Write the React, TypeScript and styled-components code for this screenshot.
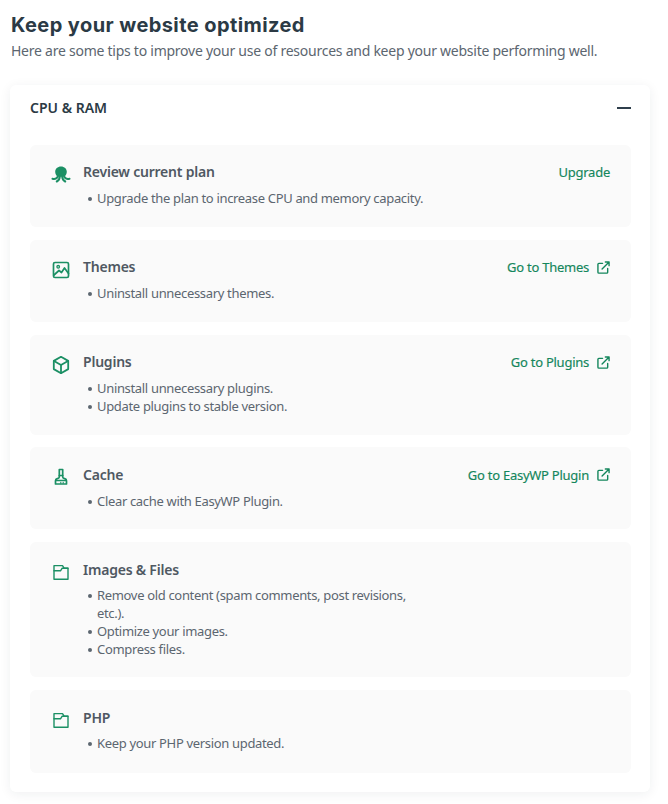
import React from "react";
import styled, { createGlobalStyle } from "styled-components";

const Global = createGlobalStyle`
  html, body { margin: 0; padding: 0; background: #fff; }
  body { font-family: "Noto Sans", "Open Sans", sans-serif; color: #4b5563; }
`;
const Page = styled.div`
  width: 668px; height: 804px; box-sizing: border-box; padding: 13px 18px 0 10px; overflow: hidden;
`;
const Title = styled.h1`
  margin: 0 0 0 1px; font: 700 20px/24px Inter, sans-serif; color: #2b3a45; letter-spacing: 0.42px;
`;
const Subtitle = styled.p`
  margin: 2px 0 0 1px; font-size: 14px; line-height: 24px; letter-spacing: -0.25px; color: #5c6670;
`;
const Card = styled.section`
  margin-top: 22px; background: #fff; border-radius: 6px; padding: 0 19px 0 20px;
  box-shadow: 0 2px 12px rgba(30, 40, 50, 0.07); height: 707px; box-sizing: border-box;
`;
const CardHeader = styled.header`
  height: 45px; margin-bottom: 14.8px; display: flex; align-items: center; justify-content: space-between;
  font-size: 14px; font-weight: 600; color: #2b3a45; letter-spacing: 0;
`;
const Minus = styled.span`
  width: 14px; height: 2px; background: #2f3f4c;
`;
const Items = styled.div`
  display: flex; flex-direction: column; gap: 12.6px;
`;
const Item = styled.article<{ $h: number }>`
  height: ${p => p.$h}px; box-sizing: border-box; background: #fafafa; border-radius: 6px;
  padding: 15.6px 21px 0 21px; display: grid; grid-template-columns: 32px 1fr auto; align-items: start;
`;
const IconBox = styled.span`
  width: 20px; height: 22px; display: flex; align-items: center; justify-content: center; color: #1b8f64;
  margin-top: 3.5px;
`;
const Body = styled.div``;
const ItemTitle = styled.h3`
  margin: 0; font-size: 14px; line-height: 24px; font-weight: 600; color: #4f5862; letter-spacing: -0.22px;
`;
const Tips = styled.ul`
  margin: 5.8px 0 0; padding: 0 0 0 14px; width: 335px; list-style: none;
`;
const Tip = styled.li`
  position: relative; font-size: 13px; line-height: 17.7px; color: #5c6670; letter-spacing: -0.33px;
  &::before { content: ""; position: absolute; left: -9px; top: 7px; width: 4px; height: 4px; border-radius: 50%; background: #5c6670; }
`;
const Action = styled.a`
  display: flex; align-items: center; gap: 8px; font-size: 13px; line-height: 24px; font-weight: 400;
  color: #14865c; letter-spacing: -0.25px; -webkit-text-stroke: 0.15px #14865c;
`;

const svgProps = { width: 20, height: 20, viewBox: "0 0 20 20", fill: "none", stroke: "currentColor", strokeWidth: 1.7, strokeLinecap: "round" as const, strokeLinejoin: "round" as const };

const Octopus = () => (
  <svg width="20" height="20" viewBox="0 0 20 20" fill="currentColor" stroke="currentColor" strokeLinecap="round">
    <path d="M10 1.500c3.400 0 5.800 2.300 5.800 5.200 0 2.200-1.100 3.500-2 4.500-.6.800-7 .8-7.600 0-.9-1-2-2.300-2-4.500C4.200 3.800 6.600 1.500 10 1.500z" stroke="none" />
    <path d="M7 10.500c-.3 2.700-2.700 4-5.500 3.200" fill="none" strokeWidth="2.100" />
    <path d="M13 10.500c.3 2.700 2.700 4 5.500 3.200" fill="none" strokeWidth="2.100" />
    <path d="M8.800 11c0 2.700-1 4.500-3 5.500" fill="none" strokeWidth="2.100" />
    <path d="M11.200 11c0 2.700 1 4.500 3 5.500" fill="none" strokeWidth="2.100" />
  </svg>
);
const ImageIcon = () => (
  <svg {...svgProps}>
    <rect x="2.500" y="2.500" width="15" height="15" rx="1.500" />
    <circle cx="7.200" cy="6.800" r="1.300" strokeWidth="1.300" />
    <path d="M3 15l5-4.500 2.500 2 3-4.500 4 5.500" />
  </svg>
);
const Cube = () => (
  <svg {...svgProps} strokeWidth={1.8}>
    <path d="M10 1.800l7.200 4.100v8.200L10 18.200l-7.200-4.100V5.900z" />
    <path d="M3 6l7 4 7-4M10 10v8" />
  </svg>
);
const Brush = () => (
  <svg {...svgProps}>
    <path d="M8.300 2.500h3.400v6H8.300z" />
    <path d="M8.300 8.500v1.500c0 .9-1 1.300-2 1.600-1 .3-1.800 1-1.800 2.200v3.200h11v-3.200c0-1.200-.8-1.900-1.800-2.200-1-.3-2-.7-2-1.600V8.500" />
    <path d="M5 13.500h10" />
    <path d="M9.800 15.300v1M12.200 15.300v1" strokeWidth="1.100" />
  </svg>
);
const Folder = () => (
  <svg {...svgProps} strokeWidth={1.4}>
    <path d="M3 7V3.600h8.500l1.600 2.600h3.900v11H3z" />
    <path d="M3 8.800h6.500l1.700-2.600H17" />
  </svg>
);
const External = () => (
  <svg width="13" height="13" viewBox="0 0 14 14" fill="none" stroke="currentColor" strokeWidth="1.500" strokeLinecap="round" strokeLinejoin="round">
    <path d="M6 2.500H2a1 1 0 0 0-1 1V12a1 1 0 0 0 1 1h8.500a1 1 0 0 0 1-1V8" />
    <path d="M5.500 8.500L13 1M9 1h4v4" />
  </svg>
);

const items = [
  { icon: <Octopus />, title: "Review current plan", h: 82.3, action: "Upgrade", ext: false, tips: ["Upgrade the plan to increase CPU and memory capacity."] },
  { icon: <ImageIcon />, title: "Themes", h: 82.3, action: "Go to Themes", ext: true, tips: ["Uninstall unnecessary themes."] },
  { icon: <Cube />, title: "Plugins", h: 100, action: "Go to Plugins", ext: true, tips: ["Uninstall unnecessary plugins.", "Update plugins to stable version."] },
  { icon: <Brush />, title: "Cache", h: 82.3, action: "Go to EasyWP Plugin", ext: true, tips: ["Clear cache with EasyWP Plugin."] },
  { icon: <Folder />, title: "Images & Files", h: 135.3, action: "", ext: false, tips: ["Remove old content (spam comments, post revisions, etc.).", "Optimize your images.", "Compress files."] },
  { icon: <Folder />, title: "PHP", h: 83, action: "", ext: false, tips: ["Keep your PHP version updated."] },
];

export default function App() {
  return (
    <Page>
      <Global />
      <Title>Keep your website optimized</Title>
      <Subtitle>Here are some tips to improve your use of resources and keep your website performing well.</Subtitle>
      <Card>
        <CardHeader>CPU &amp; RAM<Minus /></CardHeader>
        <Items>
          {items.map(it => (
            <Item key={it.title} $h={it.h}>
              <IconBox>{it.icon}</IconBox>
              <Body>
                <ItemTitle>{it.title}</ItemTitle>
                <Tips>{it.tips.map(t => <Tip key={t}>{t}</Tip>)}</Tips>
              </Body>
              {it.action ? <Action>{it.action}{it.ext && <External />}</Action> : <span />}
            </Item>
          ))}
        </Items>
      </Card>
    </Page>
  );
}
